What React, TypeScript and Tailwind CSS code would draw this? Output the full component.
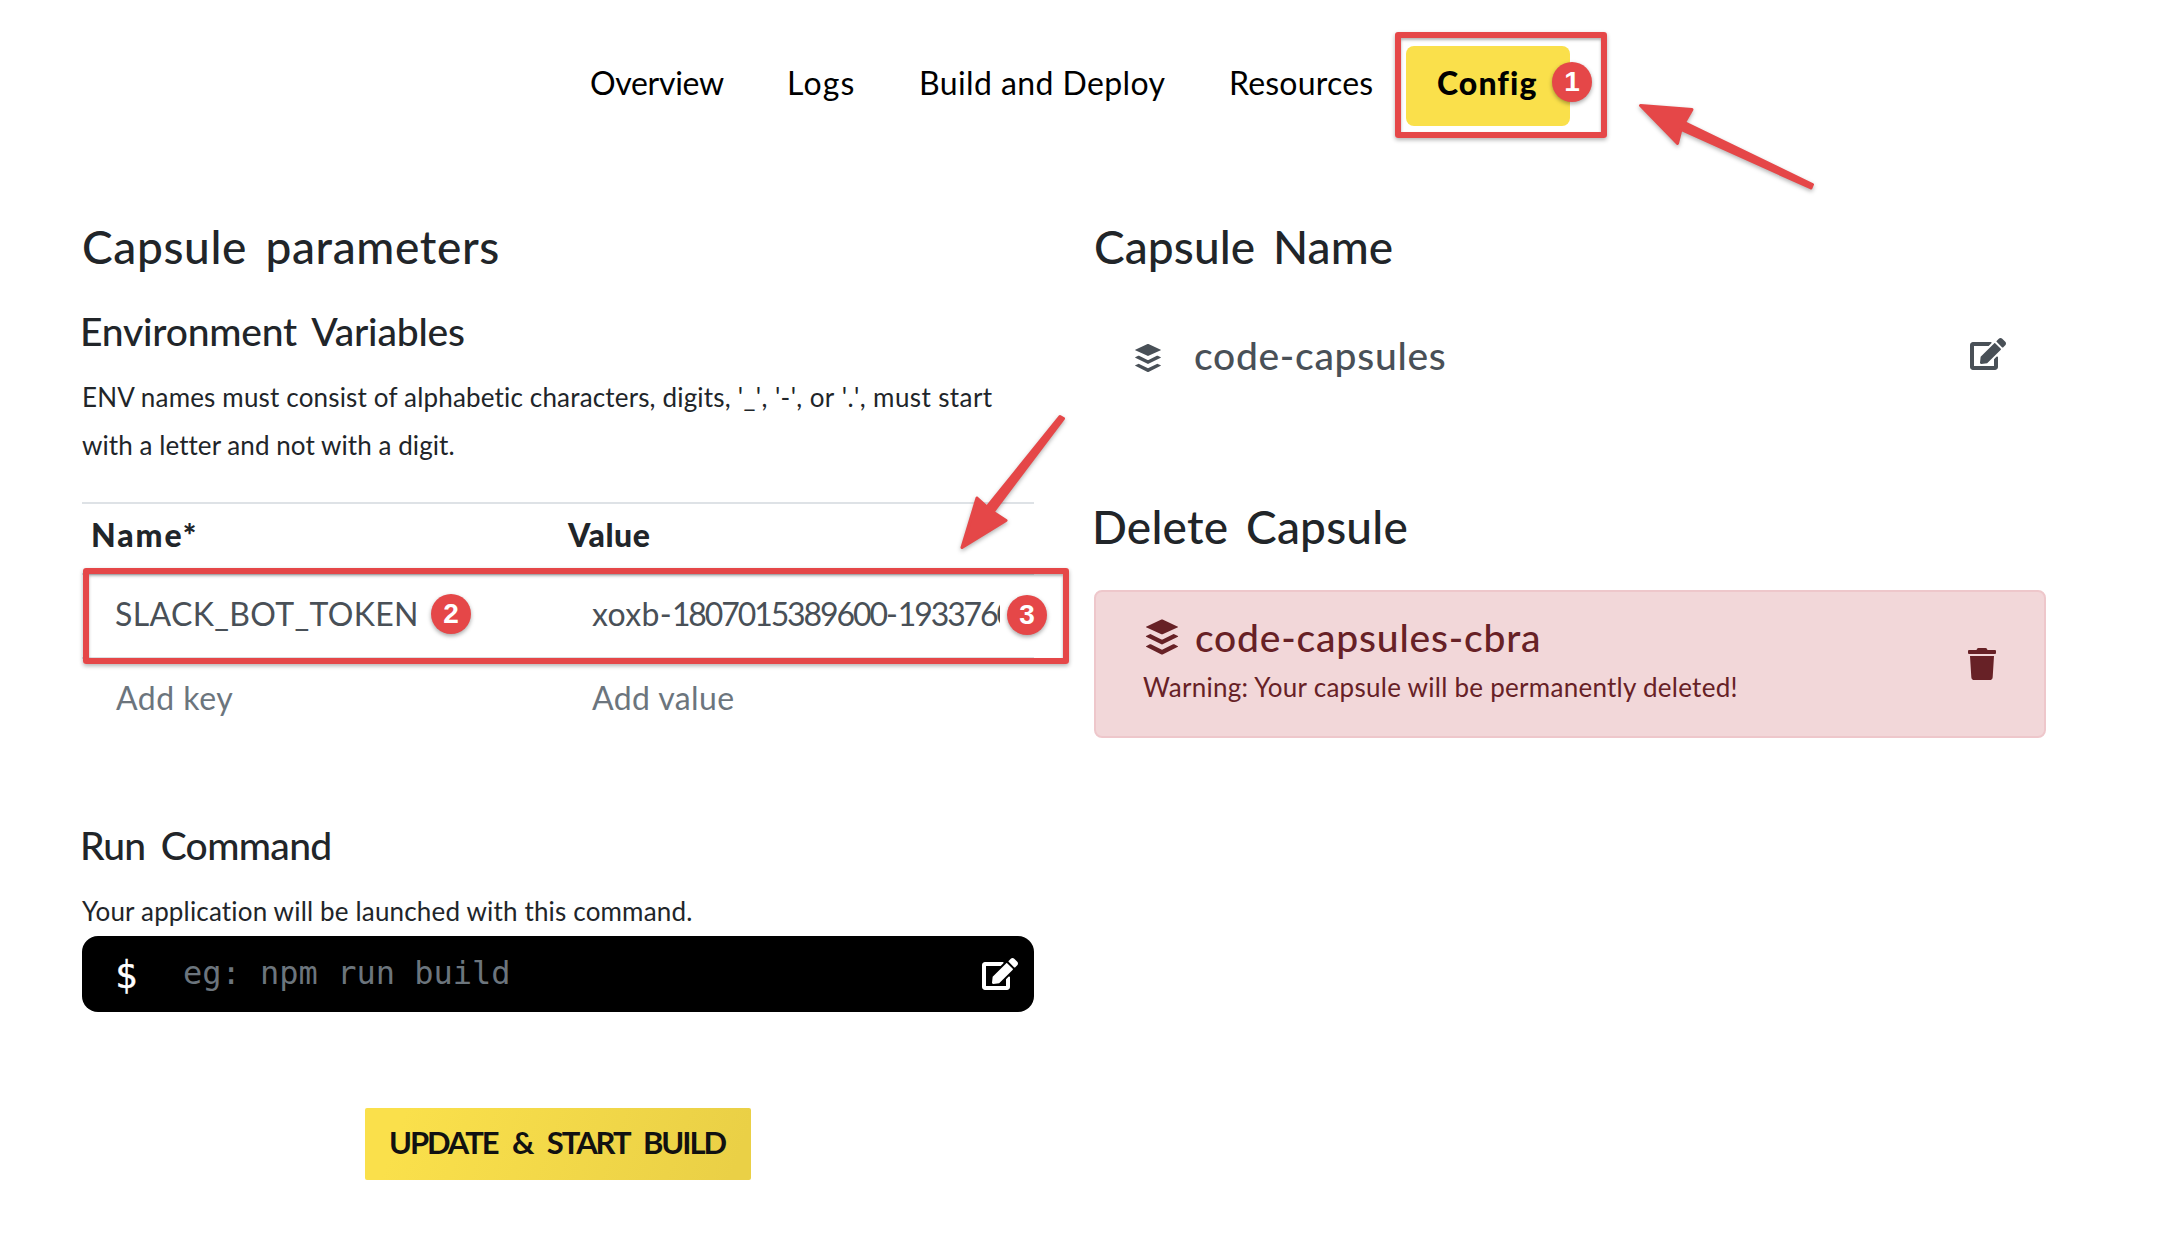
import React from "react";
import { FaBuffer, FaEdit, FaTrash } from "react-icons/fa";

const RED = "#e54748";

function NumberBadge({ n, className }: { n: number; className: string }) {
  return (
    <span
      className={`absolute flex size-10 items-center justify-center rounded-full bg-[#e54748] font-['Liberation_Sans'] text-[28px] leading-none font-bold text-white shadow-[0_2px_4px_rgba(0,0,0,0.35)] ${className}`}
    >
      {n}
    </span>
  );
}

function Frame({ className }: { className: string }) {
  return (
    <div
      className={`pointer-events-none absolute rounded-[3px] border-6 border-[#e54748] shadow-[0_2px_4px_rgba(0,0,0,0.3),inset_0_2px_3px_rgba(0,0,0,0.3)] ${className}`}
    />
  );
}

function Annotations() {
  return (
    <>
      <Frame className="top-8 left-[1395px] h-[106px] w-[212px]" />
      <NumberBadge n={1} className="top-[62px] left-[1552px]" />
      <Frame className="top-[568px] left-[83px] h-24 w-[986px]" />
      <NumberBadge n={2} className="top-[594px] left-[431px]" />
      <NumberBadge n={3} className="top-[595px] left-[1007px]" />
      <svg
        className="pointer-events-none absolute top-0 left-0 drop-shadow-[0_2px_2px_rgba(0,0,0,0.3)]"
        width="2162"
        height="600"
        viewBox="0 0 2162 600"
        fill={RED}
        stroke={RED}
        strokeWidth="3"
        strokeLinejoin="round"
      >
        <path d="M1640.5 105.5 L1692 109.5 L1684.5 122.5 L1812.5 184.5 L1811 188 L1681 129.5 L1677.5 143.5 Z" />
        <path d="M1060 416.5 L1063.5 418.5 L993 512 L1006 520.5 L962 547.5 L977 498 L987 507 Z" />
      </svg>
    </>
  );
}

function Heading({ className = "", children }: { className?: string; children: React.ReactNode }) {
  return <h2 className={`text-[46px] leading-[56px] font-medium ${className}`}>{children}</h2>;
}

function SubHeading({ className = "", children }: { className?: string; children: React.ReactNode }) {
  return <h3 className={`text-[39px] leading-[48px] font-medium ${className}`}>{children}</h3>;
}

export default function App() {
  return (
    <div className="relative h-[1256px] w-[2162px] overflow-hidden bg-white font-['Lato',sans-serif] text-[#212529]">
      <nav className="flex pt-[46px] pl-[590px] text-[32px] text-black">
        <a className="flex h-20 w-[197px] items-center pb-[7px] tracking-[-0.3px]">Overview</a>
        <a className="flex h-20 w-[132px] items-center pb-[7px] tracking-[1.2px]">Logs</a>
        <a className="flex h-20 w-[310px] items-center pb-[7px] tracking-[0.4px]">Build and Deploy</a>
        <a className="flex h-20 w-[177px] items-center pb-[7px] tracking-[0.2px]">Resources</a>
        <a className="flex h-20 w-[164px] items-center rounded-lg bg-[#fae04b] pb-[7px] pl-[31px] font-black tracking-[1.1px]">
          Config
        </a>
      </nav>

      <main className="flex gap-[60px] pt-[93px] pl-[82px]">
        <section className="w-[952px]">
          <Heading className="tracking-[0.65px] [word-spacing:6px]">Capsule parameters</Heading>
          <SubHeading className="mt-8 -ml-0.5 tracking-[-0.2px] [word-spacing:6px]">Environment Variables</SubHeading>
          <p className="mt-[18px] text-[26px] leading-[48px] whitespace-nowrap">
            <span className="tracking-[0.17px]">ENV names must consist of alphabetic characters, digits,</span>
            <span className="tracking-[0.4px] [font-kerning:none]"> '_', '-', or '.', must start</span>
            <br />
            <span className="tracking-[0.07px]">with a letter and not with a digit.</span>
          </p>

          <div className="mt-[33px] text-[32px]">
            <div className="grid h-[71px] grid-cols-2 border-t-2 border-[#dee2e6] leading-[61px] font-black">
              <div className="pl-[9px] tracking-[1.9px]">Name*</div>
              <div className="pl-2.5 tracking-[0.5px]">Value</div>
            </div>
            <div className="grid h-[84px] grid-cols-2 border-t-2 border-[#dee2e6] leading-[77px] text-[#495057]">
              <div className="pl-[33px] tracking-[0.35px]">SLACK_BOT_TOKEN</div>
              <div className="ml-[34px] w-[408px] overflow-hidden whitespace-nowrap">
                <span className="tracking-[0.3px]">xoxb-</span>
                <span className="tracking-[-2.1px]">1807015389600</span>-
                <span className="tracking-[-2.1px]">1933760</span>
              </div>
            </div>
            <div className="grid h-[84px] grid-cols-2 border-t-2 border-[#dee2e6] leading-[77px] text-[#6c757d]">
              <div className="pl-[34px] tracking-[0.5px]">Add key</div>
              <div className="pl-[34px] tracking-[0.4px]">Add value</div>
            </div>
          </div>

          <SubHeading className="mt-20 -ml-0.5 tracking-[-0.65px] [word-spacing:6px]">Run Command</SubHeading>
          <p className="mt-[18px] text-[26px] leading-[48px] tracking-[0.17px]">
            Your application will be launched with this command.
          </p>
          <div className="mt-px flex h-[76px] items-center rounded-2xl bg-black pr-4 pl-[33px] font-['DejaVu_Sans_Mono',monospace]">
            <span className="w-[68px] pt-0.5 text-[37px] leading-none text-white [-webkit-text-stroke:0.4px_white]">$</span>
            <span className="flex-1 pb-0.5 text-[32px] leading-none text-[#6c757d]">eg: npm run build</span>
            <FaEdit className="h-8 w-9 text-white" />
          </div>
          <button className="mx-auto mt-24 flex h-[72px] w-[386px] items-center justify-center rounded-xs bg-[linear-gradient(110deg,#fae04b_10%,#ead046_95%)] pr-0.5 pb-[3px] text-[31px] font-bold tracking-[-2.05px] whitespace-nowrap text-[#111] [word-spacing:9px]">
            UPDATE &amp; START BUILD
          </button>
        </section>

        <section className="w-[952px]">
          <Heading className="tracking-[0.1px] [word-spacing:6px]">Capsule Name</Heading>
          <div className="mt-14 flex h-12 items-center pr-10 pl-[38px] text-[#495057]">
            <FaBuffer className="mt-1.5 size-8" />
            <SubHeading className="ml-[30px] flex-1 tracking-[0.7px]">code-capsules</SubHeading>
            <FaEdit className="-mt-0.5 h-8 w-9" />
          </div>
          <Heading className="mt-[120px] -ml-0.5 tracking-[0.2px] [word-spacing:6px]">Delete Capsule</Heading>
          <div className="mt-[35px] flex h-[148px] items-center justify-between rounded-lg border-2 border-[#eec7cb] bg-[#f2d7d9] pr-12 pl-[46px] text-[#672126]">
            <div className="h-full pt-[21px]">
              <div className="flex h-12 items-center">
                <FaBuffer className="-mt-px size-10" />
                <SubHeading className="ml-[13px] tracking-[0.8px]">code-capsules-cbra</SubHeading>
              </div>
              <p className="mt-0.5 ml-px text-[26px] leading-[48px] tracking-[0.27px]">
                Warning: Your capsule will be permanently deleted!
              </p>
            </div>
            <FaTrash className="h-8 w-7" />
          </div>
        </section>
      </main>

      <Annotations />
    </div>
  );
}
